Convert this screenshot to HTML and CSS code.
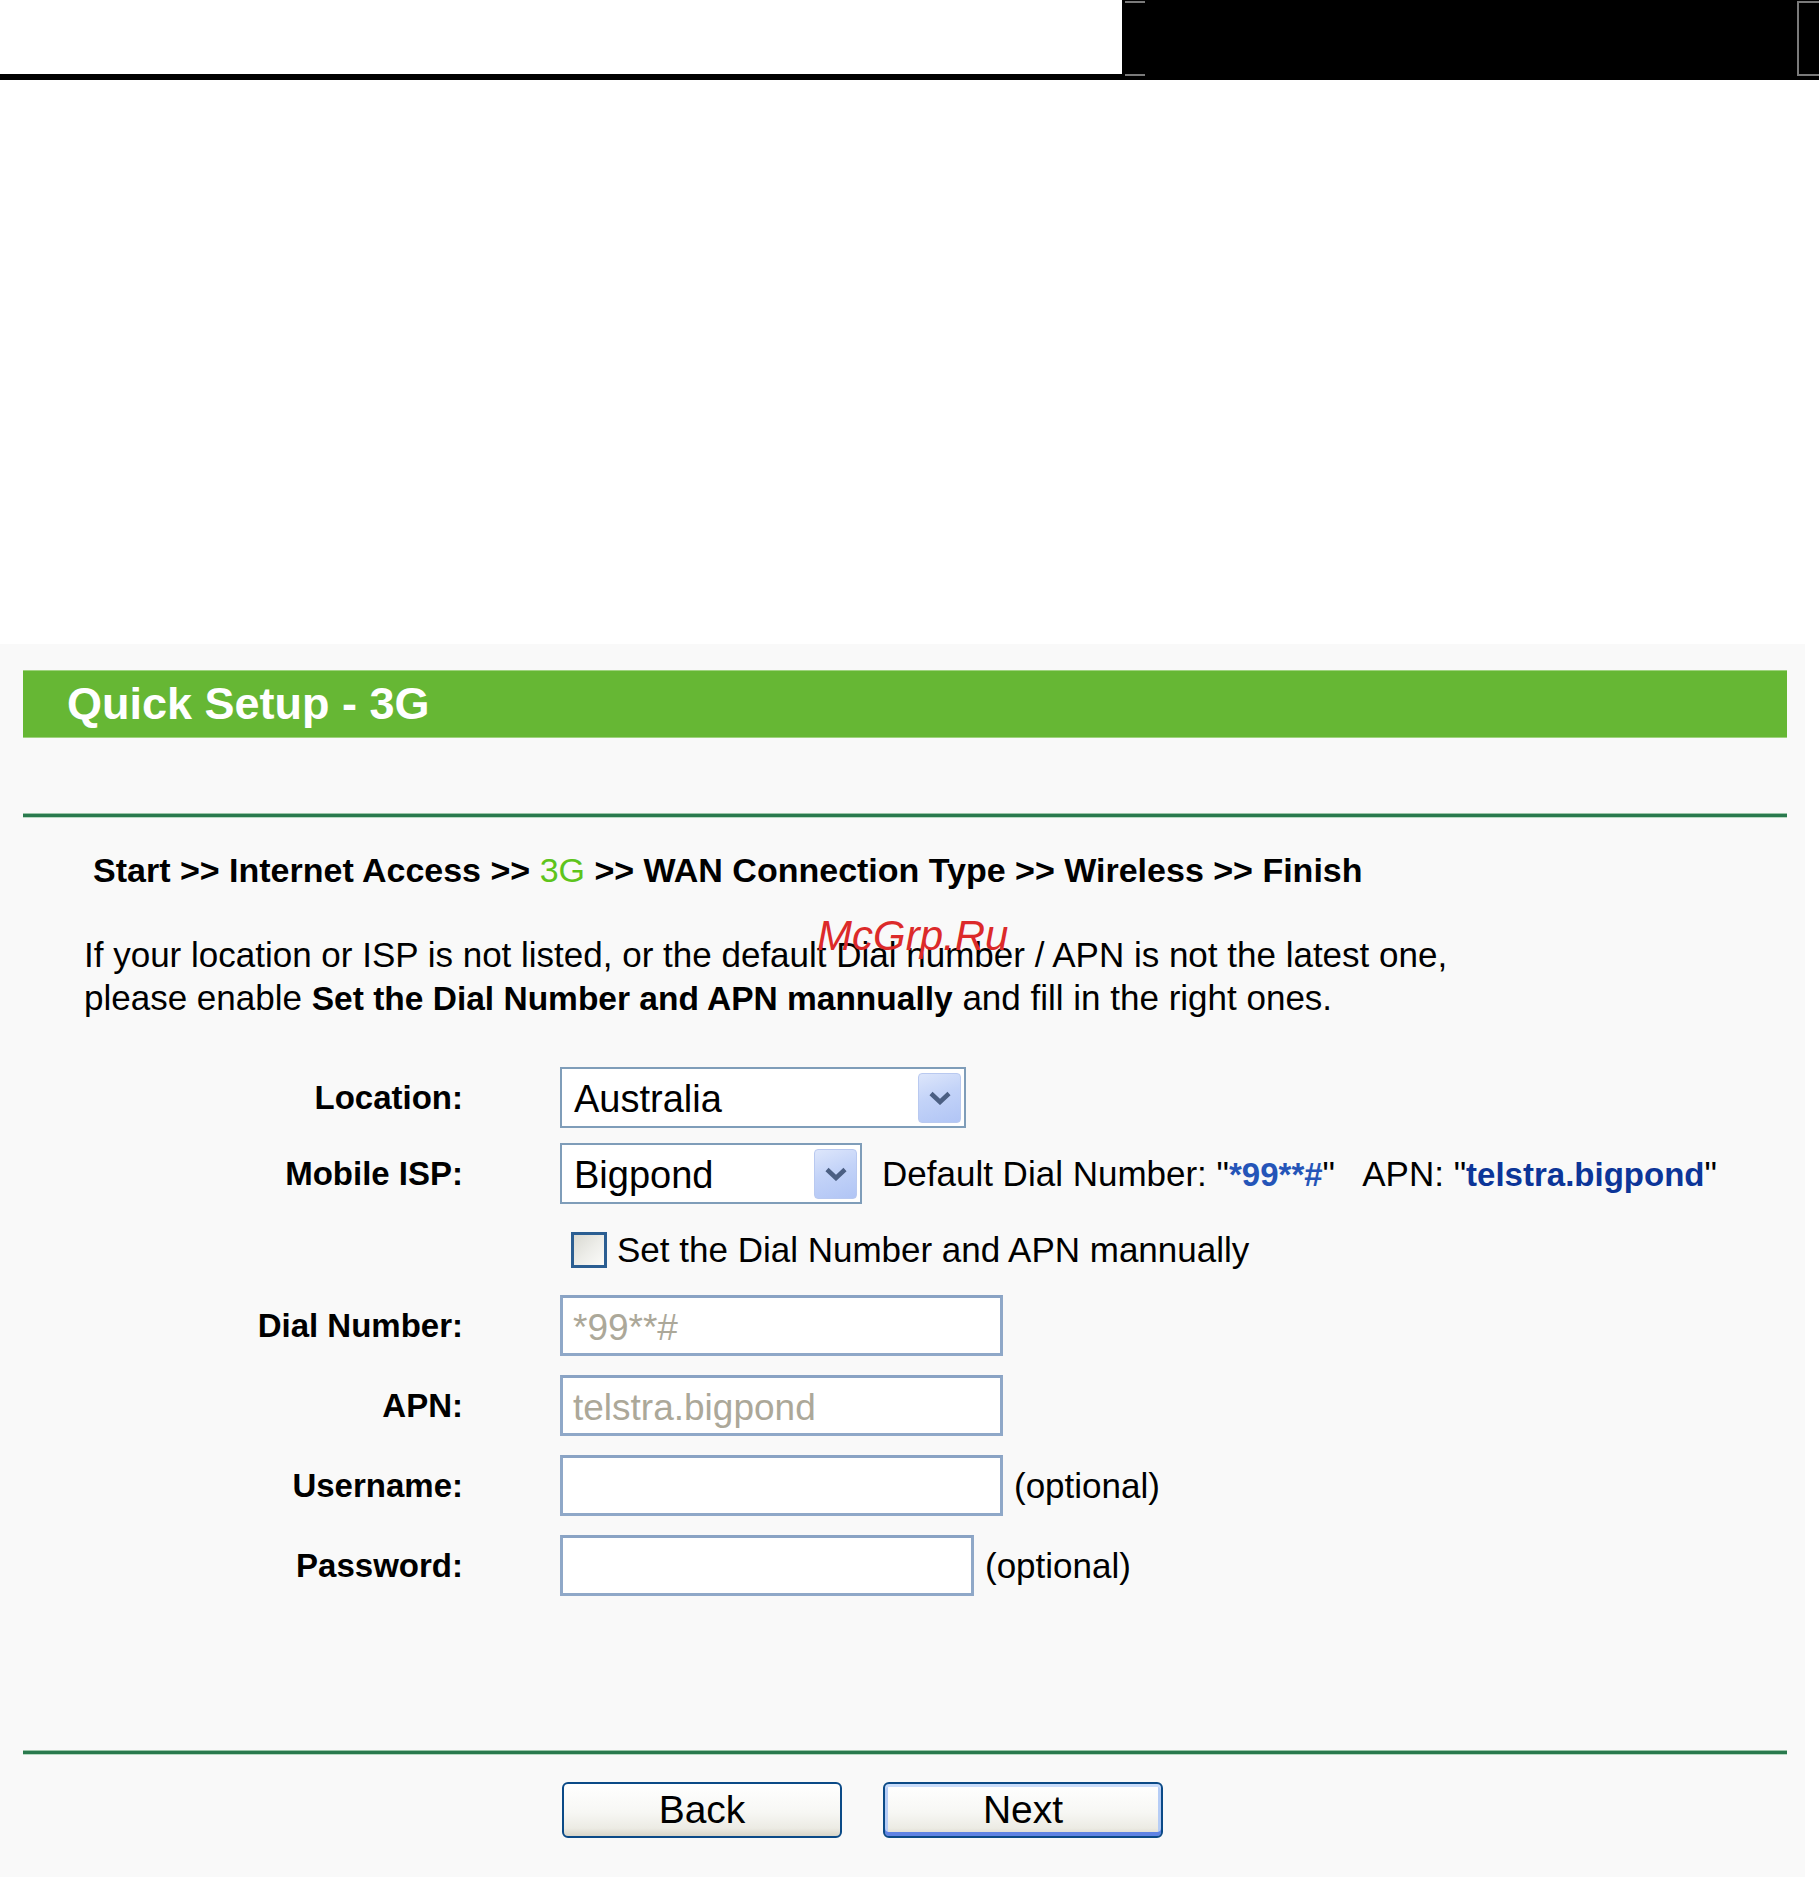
FILE: index.html
```html
<!DOCTYPE html>
<html lang="en">
<head>
<meta charset="utf-8">
<title>Quick Setup - 3G</title>
<link rel="stylesheet" href="styles.css">
</head>
<body>
<div class="topbar">
  <div class="top-left"></div>
  <div class="top-right">
    <span class="mark mark-l"></span>
    <span class="mark mark-r"></span>
  </div>
</div>

<div class="panel">
  <div class="title-bar"><h1 class="title">Quick Setup - 3G</h1></div>
  <div class="sep"></div>
  <div class="crumbs">Start &gt;&gt; Internet Access &gt;&gt; <span class="cur">3G</span> &gt;&gt; WAN Connection Type &gt;&gt; Wireless &gt;&gt; Finish</div>
  <p class="intro">If your location or ISP is not listed, or the default Dial number / APN is not the latest one,<br>please enable <b>Set the Dial Number and APN mannually</b> and fill in the right ones.</p>

  <div class="form">
    <div class="row">
      <div class="label">Location:</div>
      <div class="ctrl">
        <div class="select sel-loc">
          <span class="sel-text">Australia</span>
          <span class="sel-btn"><svg width="24" height="14" viewBox="0 0 24 14"><path d="M3 2.5 L12 11 L21 2.5" fill="none" stroke="#4b5f83" stroke-width="4.5"/></svg></span>
        </div>
      </div>
    </div>
    <div class="row">
      <div class="label">Mobile ISP:</div>
      <div class="ctrl">
        <div class="select sel-isp">
          <span class="sel-text">Bigpond</span>
          <span class="sel-btn"><svg width="24" height="14" viewBox="0 0 24 14"><path d="M3 2.5 L12 11 L21 2.5" fill="none" stroke="#4b5f83" stroke-width="4.5"/></svg></span>
        </div>
        <span class="defaults">Default Dial Number: "<b class="val">*99**#</b>"&nbsp;&nbsp; APN: "<b class="val val-dark">telstra.bigpond</b>"</span>
      </div>
    </div>
    <div class="row">
      <div class="label"></div>
      <div class="ctrl">
        <span class="checkbox"></span>
        <span class="check-text">Set the Dial Number and APN mannually</span>
      </div>
    </div>
    <div class="row row-wide">
      <div class="label">Dial Number:</div>
      <div class="ctrl"><div class="input in-long disabled">*99**#</div></div>
    </div>
    <div class="row row-wide">
      <div class="label">APN:</div>
      <div class="ctrl"><div class="input in-long disabled">telstra.bigpond</div></div>
    </div>
    <div class="row row-wide">
      <div class="label">Username:</div>
      <div class="ctrl"><div class="input in-long"></div><span class="note">(optional)</span></div>
    </div>
    <div class="row row-wide">
      <div class="label">Password:</div>
      <div class="ctrl"><div class="input in-short"></div><span class="note">(optional)</span></div>
    </div>
  </div>

  <div class="sep sep-bottom"></div>
  <div class="buttons">
    <button class="btn" type="button">Back</button>
    <button class="btn btn-default" type="button">Next</button>
  </div>

  <div class="watermark">McGrp.Ru</div>
</div>
</body>
</html>
```

FILE: styles.css
```css
html, body {
  margin: 0;
  padding: 0;
  background: #ffffff;
}

body {
  font-family: "Liberation Sans", Arial, sans-serif;
  color: #000;
  width: 1819px;
  min-height: 1877px;
  overflow: hidden;
}

/* ---------- top strip ---------- */
.topbar {
  display: flex;
  height: 74px;
  border-bottom: 6px solid #000;
}
.top-left {
  flex: 1;
  background: #fff;
}
.top-right {
  width: 697px;
  background: #000;
  position: relative;
}
.mark {
  position: absolute;
  top: 1px;
  height: 71px;
  width: 20px;
  border-top: 2px solid #7a7a7a;
  border-bottom: 2px solid #7a7a7a;
}
.mark-l { left: 3px; }
.mark-r { left: 675px; border-left: 2px solid #7a7a7a; }

/* ---------- panel ---------- */
.panel {
  position: relative;
  margin-top: 564px;
  width: 1805px;
  box-sizing: border-box;
  padding: 26px 18px 40px 23px;
  background: #f9f9f9;
  min-height: 1233px;
}

.title-bar {
  height: 68px;
  box-sizing: border-box;
  background: #66b734;
  border-top: 1px solid #9fd27e;
  border-bottom: 1px solid #9fd27e;
}
.title {
  margin: 0;
  padding-left: 44px;
  font-size: 45px;
  line-height: 66px;
  font-weight: bold;
  color: #fff;
}

.sep {
  margin-top: 76px;
  height: 3px;
  background: #2a7a4e;
  box-shadow: 0 -1px 0 #9ac6a8, 0 1px 0 #b8d9c2;
}

.crumbs {
  margin-top: 33px;
  padding-left: 70px;
  font-size: 34px;
  line-height: 40px;
  font-weight: bold;
}
.crumbs .cur {
  color: #5ec41c;
  font-weight: normal;
}

.intro {
  margin: 43px 0 0 0;
  padding-left: 61px;
  font-size: 35px;
  line-height: 43px;
}
.intro b {
  font-size: 33.5px;
}

/* ---------- form ---------- */
.form {
  margin-top: 47px;
  display: flex;
  flex-direction: column;
  gap: 15px;
}
.row {
  display: flex;
  align-items: center;
  height: 61px;
}
.row-wide + .row-wide {
  margin-top: 4px;
}
.label {
  width: 440px;
  flex: none;
  text-align: right;
  font-size: 33px;
  font-weight: bold;
}
.ctrl {
  margin-left: 97px;
  display: flex;
  align-items: center;
  height: 100%;
}

.select {
  box-sizing: border-box;
  height: 61px;
  border: 2px solid #7f9db9;
  background: #fff;
  display: flex;
  align-items: center;
}
.sel-loc { width: 406px; }
.sel-isp { width: 302px; }
.sel-text {
  flex: 1;
  padding-left: 12px;
  padding-top: 4px;
  font-size: 38px;
}
.sel-btn {
  width: 43px;
  height: 50px;
  margin-right: 3px;
  box-sizing: border-box;
  border: 1px solid #b9c9f0;
  border-radius: 4px;
  background: linear-gradient(160deg, #dde6fb 0%, #c3d3f8 45%, #b1c5f5 100%);
  display: flex;
  align-items: center;
  justify-content: center;
}
.sel-btn svg { display: block; }

.defaults {
  margin-left: 20px;
  font-size: 35px;
  white-space: nowrap;
}
.val {
  color: #2555b8;
  font-size: 33px;
}
.val-dark { color: #0c3598; }

.checkbox {
  margin-left: 11px;
  width: 36px;
  height: 36px;
  box-sizing: border-box;
  border: 3px solid #2b5e92;
  background: linear-gradient(135deg, #d9d9d2 0%, #eeeeea 55%, #fbfbf9 100%);
}
.check-text {
  margin-left: 10px;
  font-size: 35px;
}

.input {
  box-sizing: border-box;
  height: 61px;
  border: 3px solid #8fa8c8;
  border-top-color: #8aa3c4;
  background: #fff;
  padding-left: 10px;
  padding-top: 4px;
  font-size: 37px;
  line-height: 52px;
}
.in-long { width: 443px; }
.in-short { width: 414px; }
.disabled { color: #aca899; }

.note {
  margin-left: 11px;
  font-size: 35px;
}

/* ---------- bottom ---------- */
.sep-bottom {
  margin-top: 155px;
}
.buttons {
  margin-top: 28px;
  padding-left: 539px;
  display: flex;
  gap: 41px;
}
.btn {
  width: 280px;
  height: 56px;
  box-sizing: border-box;
  border: 2px solid #0b4a87;
  border-radius: 6px;
  background: linear-gradient(#ffffff 0%, #f7f7f4 55%, #ecebe4 85%, #d8d5c8 100%);
  font-family: "Liberation Sans", Arial, sans-serif;
  font-size: 39px;
  color: #000;
  padding: 0;
  line-height: 50px;
}
.btn-default {
  box-shadow: inset 0 3px 0 #c8dcfb, inset 0 -4px 0 #5f83e4, inset 3px 0 0 #b6cdf6, inset -3px 0 0 #b6cdf6;
}

.watermark {
  position: absolute;
  left: 817px;
  top: 271px;
  font-size: 42px;
  line-height: 42px;
  font-style: italic;
  color: #dc2a2a;
  white-space: nowrap;
}
```
